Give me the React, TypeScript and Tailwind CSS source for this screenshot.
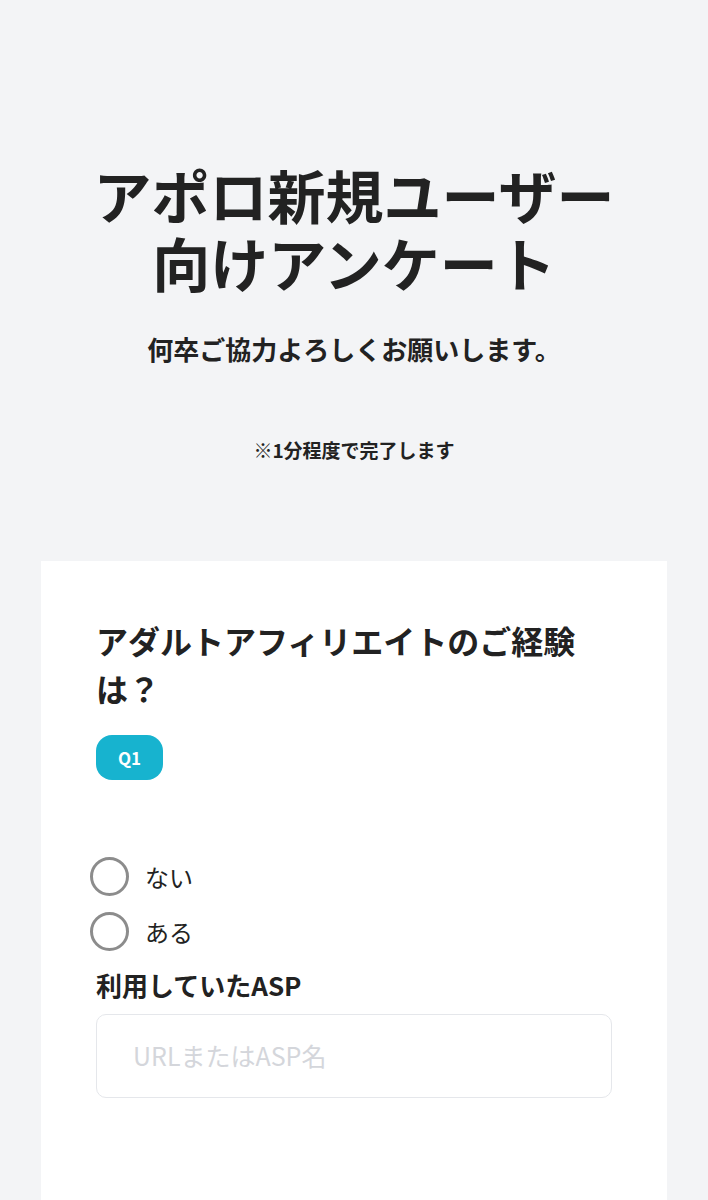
import React from 'react';

const jp = { fontFamily: '"Noto Sans CJK JP", "Noto Sans", sans-serif' };

const Radio = ({ label }: { label: string }) => (
  <label className="flex items-center h-[55px] -ml-[6px] gap-4 cursor-pointer">
    <span className="w-[39px] h-[39px] rounded-full border-[3px] border-[#8c8c8c] bg-white" />
    <span className="text-[24px] text-[#222]">{label}</span>
  </label>
);

export default function App() {
  return (
    <div className="min-h-[1200px] bg-[#f3f4f6] text-[#222] flex flex-col" style={jp}>
      {/* Header */}
      <div className="flex flex-col items-center pt-[160px]">
        <h1 className="text-[58px] leading-[68px] font-bold text-center">
          <span className="block">アポロ新規ユーザー</span>
          <span className="block">向けアンケート</span>
        </h1>
        <p className="mt-[35px] text-[26px] leading-[36px] font-bold">何卒ご協力よろしくお願いします。</p>
        <p className="mt-[68px] text-[19px] leading-[30px] font-bold">※1分程度で完了します</p>
      </div>

      {/* Card */}
      <div className="flex-1 mx-[41px] mt-[96px] bg-white px-[55px] pt-[55px] pb-[120px]">
        <h2 className="w-[500px] text-[32px] leading-[48px] font-bold">アダルトアフィリエイトのご経験は？</h2>
        <div className="mt-[23px] w-[67px] h-[45px] rounded-[16px] bg-[#17b3cf] flex items-center justify-center text-white text-[17px] font-bold">
          Q1
        </div>

        <div className="mt-[69px] flex flex-col">
          <Radio label="ない" />
          <Radio label="ある" />
        </div>

        <p className="mt-[8px] text-[26px] leading-[36px] font-bold">利用していたASP</p>
        <div className="mt-[11px] h-[84px] rounded-[10px] border border-[#e5e7eb] flex items-center pl-[36px]">
          <span className="text-[25px] text-[#d4d6db]">URLまたはASP名</span>
        </div>
      </div>
    </div>
  );
}
